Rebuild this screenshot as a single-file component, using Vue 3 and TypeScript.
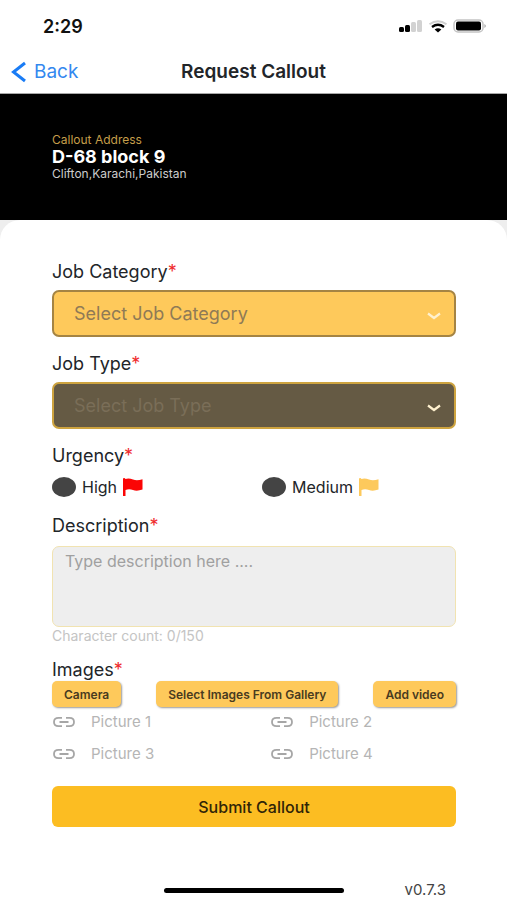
<script setup lang="ts">
import { computed, ref } from 'vue'

interface Urgency {
  id: string
  label: string
  tone: string
}

const category = ref('')
const jobType = ref('')
const urgency = ref('')
const description = ref('')
const maxLength = 150

const categories: string[] = ['Electrical', 'Plumbing', 'Carpentry']
const jobTypes: string[] = ['Repair', 'Installation']
const urgencies: Urgency[] = [
  { id: 'high', label: 'High', tone: 'red' },
  { id: 'medium', label: 'Medium', tone: 'amber' },
]
const pictures: string[] = ['Picture 1', 'Picture 2', 'Picture 3', 'Picture 4']

const count = computed<number>(() => description.value.length)
</script>

<template>
  <div class="screen">
    <div class="status">
      <span class="time">2:29</span>
      <div class="indicators">
        <svg width="24" height="13" viewBox="0 0 24 13" aria-hidden="true">
          <rect x="0" y="7" width="5" height="5" rx="1.5" fill="#000" />
          <rect x="6" y="5" width="5" height="7" rx="1.5" fill="#000" />
          <rect x="12" y="2" width="5" height="10" rx="1.5" fill="#d2d2d2" />
          <rect x="18" y="0" width="5" height="12" rx="1.5" fill="#d2d2d2" />
        </svg>
        <svg width="20" height="13" viewBox="0 0 20 13" aria-hidden="true">
          <path d="M1.500 4.200Q10-1.800 18.500 4.200" fill="none" stroke="#cfcfcf" stroke-width="2" />
          <path d="M4 7Q10 2.600 16 7" fill="none" stroke="#000" stroke-width="2.400" />
          <path d="M6.600 9.400Q10 7 13.400 9.400L10 12.500Z" fill="#000" />
        </svg>
        <svg width="34" height="14" viewBox="0 0 34 14" aria-hidden="true">
          <rect x="1" y="1" width="29" height="12" rx="4" fill="#fff" stroke="#c4c4c4" stroke-width="1.500" />
          <rect x="3" y="2.500" width="25" height="9" rx="2" fill="#000" />
          <path d="M31.500 5Q34 7 31.500 9Z" fill="#999" />
        </svg>
      </div>
    </div>

    <header class="nav">
      <a class="back" href="#">
        <svg width="16" height="22" viewBox="0 0 16 22" aria-hidden="true">
          <path d="M14 2L2.500 11L14 20" fill="none" stroke="#1a7cf5" stroke-width="3" />
        </svg>
        Back
      </a>
      <h1>Request Callout</h1>
    </header>

    <section class="address">
      <p class="caption">Callout Address</p>
      <p class="street">D-68 block 9</p>
      <p class="city">Clifton,Karachi,Pakistan</p>
    </section>

    <main class="backdrop">
      <form class="sheet" @submit.prevent>
        <div class="field">
          <label for="category">Job Category<span class="req">*</span></label>
          <div class="select-wrap">
            <select id="category" v-model="category" class="select">
              <option value="">Select Job Category</option>
              <option v-for="c in categories" :key="c">{{ c }}</option>
            </select>
            <svg class="chevron" width="14" height="8" viewBox="0 0 14 8" aria-hidden="true">
              <path d="M1 1.500L7 6L13 1.500" fill="none" stroke="#fff1cf" stroke-width="2.200" />
            </svg>
          </div>
        </div>

        <div class="field">
          <label for="type">Job Type<span class="req">*</span></label>
          <div class="select-wrap">
            <select id="type" v-model="jobType" class="select locked" :disabled="!category">
              <option value="">Select Job Type</option>
              <option v-for="t in jobTypes" :key="t">{{ t }}</option>
            </select>
            <svg class="chevron" width="14" height="8" viewBox="0 0 14 8" aria-hidden="true">
              <path d="M1 1.500L7 6L13 1.500" fill="none" stroke="#fff1cf" stroke-width="2.200" />
            </svg>
          </div>
        </div>

        <fieldset class="urgency">
          <legend>Urgency<span class="req">*</span></legend>
          <div class="choices">
            <label v-for="u in urgencies" :key="u.id" class="choice">
              <input v-model="urgency" type="radio" name="urgency" :value="u.id" />
              <span>{{ u.label }}</span>
              <svg :class="u.tone" width="20" height="18" viewBox="0 0 20 18" aria-hidden="true">
                <path d="M0 1Q0 0 1 0Q2 0 2.500 1Q6 0 10 1.600Q14 3 19.500 1.300V11.500Q14 13.500 10 12Q6 10.500 2.500 12V18H0Z" />
              </svg>
            </label>
          </div>
        </fieldset>

        <div class="description">
          <label for="description">Description<span class="req">*</span></label>
          <textarea
            id="description"
            v-model="description"
            :maxlength="maxLength"
            placeholder="Type description here ...."
          ></textarea>
          <p class="count">Character count: {{ count }}/{{ maxLength }}</p>
        </div>

        <section class="images">
          <h2>Images<span class="req">*</span></h2>
          <div class="sources">
            <button type="button">Camera</button>
            <button type="button">Select Images From Gallery</button>
            <button type="button">Add video</button>
          </div>
          <ul class="pictures">
            <li v-for="p in pictures" :key="p">
              <svg width="24" height="12" viewBox="0 0 24 12" aria-hidden="true">
                <path
                  d="M10 1.800H6.500C3.500 1.800 2 3.600 2 6S3.500 10.200 6.500 10.200H10M14 1.800H17.500C20.500 1.800 22 3.600 22 6S20.500 10.200 17.500 10.200H14M7.500 6H16.500"
                  fill="none"
                  stroke="#a6a6a6"
                  stroke-width="1.800"
                />
              </svg>
              <span>{{ p }}</span>
            </li>
          </ul>
        </section>

        <button class="submit" type="submit">Submit Callout</button>
      </form>
    </main>

    <footer class="footer">
      <span class="home"></span>
      <span class="version">v0.7.3</span>
    </footer>
  </div>
</template>

<style>
body {
  margin: 0;
  background: #fff;
}
</style>

<style scoped>
.screen {
  min-height: 100vh;
  display: flex;
  flex-direction: column;
  box-sizing: border-box;
  color: #222529;
  background: #fff;
  font-family: Inter, "Liberation Sans", sans-serif;
}
p,
h1,
h2,
ul,
fieldset {
  margin: 0;
  padding: 0;
}
button,
select,
textarea {
  font-family: inherit;
}
.status {
  display: flex;
  justify-content: space-between;
  align-items: center;
  height: 52px;
  padding: 0 20px 0 43px;
}
.time {
  font-size: 18px;
  font-weight: 600;
  color: #111;
}
.indicators {
  display: flex;
  align-items: center;
  gap: 5px;
}
.nav {
  display: grid;
  grid-template-columns: 1fr auto 1fr;
  align-items: center;
  height: 39px;
  padding: 0 11px 2px;
  border-bottom: 1px solid #a8a8a8;
}
.back {
  display: flex;
  align-items: center;
  gap: 7px;
  font-size: 19px;
  line-height: 22px;
  color: #3388ef;
  text-decoration: none;
}
h1 {
  font-size: 19px;
  line-height: 22px;
  font-weight: 600;
}
.address {
  padding: 39px 52px;
  background: #000;
}
.caption,
.city {
  font-size: 12px;
  line-height: 14px;
}
.caption {
  color: #c59e4a;
}
.street {
  font-size: 18px;
  line-height: 20px;
  font-weight: 700;
  color: #fff;
}
.city {
  color: #ccc;
}
.backdrop {
  background: #eee;
}
.sheet {
  padding: 41px 51px 0 52px;
  border-radius: 20px 20px 0 0;
  background: #fff;
}
.field {
  margin-bottom: 16px;
}
.field > label,
.description > label,
legend,
h2 {
  display: block;
  padding: 0;
  font-size: 18px;
  line-height: 22px;
  font-weight: 400;
}
.req {
  color: #ef2b2d;
}
.select-wrap {
  position: relative;
  margin-top: 7px;
}
.select {
  display: block;
  width: 100%;
  height: 47px;
  padding: 0 40px 0 20px;
  border: 2px solid #a58443;
  border-radius: 7px;
  appearance: none;
  background: #fec95b;
  color: #8f7a56;
  font-size: 18px;
  opacity: 1;
}
.locked {
  border-color: #cda33f;
  background: #655a44;
  color: #7a6e58;
}
.chevron {
  position: absolute;
  right: 15px;
  top: 22px;
  pointer-events: none;
}
.urgency {
  border: 0;
  min-width: 0;
}
.choices,
.pictures {
  display: grid;
  grid-template-columns: 52fr 48fr;
}
.choices {
  padding: 9px 0 17px;
}
.choice {
  display: flex;
  align-items: center;
  gap: 6px;
  height: 22px;
  font-size: 16px;
}
.choice input {
  width: 24px;
  height: 20px;
  margin: 0;
  border-radius: 50%;
  appearance: none;
  background: #444;
}
.choice input:checked {
  border: 5px solid #444;
  background: #fec95b;
}
.red {
  fill: #fb0505;
}
.amber {
  fill: #fdc95c;
}
textarea {
  display: block;
  box-sizing: border-box;
  width: 100%;
  height: 81px;
  margin-top: 9px;
  padding: 4px 12px;
  border: 1px solid #f1e3b1;
  border-radius: 7px;
  resize: none;
  background: #eee;
  color: #444;
  font-size: 16px;
  line-height: 20px;
}
textarea::placeholder {
  color: #a0a0a0;
  opacity: 1;
}
.count {
  font-size: 14px;
  line-height: 18px;
  color: #c4c4c4;
}
.images {
  padding-top: 14px;
}
.sources {
  display: flex;
  justify-content: space-between;
}
.sources button {
  height: 26px;
  padding: 0 12px;
  border: 0;
  border-radius: 5px;
  background: #fec95b;
  box-shadow: 1px 1px 2px #999;
  color: #493b20;
  font-size: 12px;
  font-weight: 600;
}
.pictures {
  grid-template-columns: 54fr 46fr;
  row-gap: 10px;
  padding-top: 4px;
  list-style: none;
}
.pictures li {
  display: flex;
  align-items: center;
  gap: 15px;
  font-size: 15px;
  line-height: 22px;
  color: #b5b5b5;
}
.submit {
  display: block;
  width: 100%;
  height: 41px;
  margin-top: 21px;
  border: 0;
  border-radius: 6px;
  background: #fcbd22;
  color: #302407;
  font-size: 16px;
  font-weight: 500;
}
.footer {
  display: grid;
  grid-template-columns: 1fr 180px 1fr;
  align-items: center;
  margin-top: auto;
}
.home {
  grid-column: 2;
  height: 5px;
  border-radius: 3px;
  background: #000;
}
.version {
  text-align: center;
  font-size: 15px;
  line-height: 20px;
  color: #444;
}
</style>
